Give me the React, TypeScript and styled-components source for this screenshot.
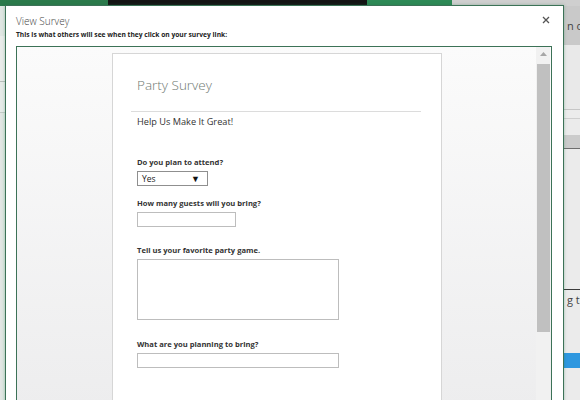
import React from 'react'
import styled, { createGlobalStyle } from 'styled-components'

const GlobalStyle = createGlobalStyle`
  html, body {
    margin: 0;
    padding: 0;
    overflow: hidden;
  }
  body {
    font-family: 'Open Sans', 'Noto Sans', sans-serif;
    color: #333;
  }
`

const Screen = styled.div`
  position: relative;
  width: 580px;
  height: 400px;
  overflow: hidden;
  background: #ebebeb;
`

const TopStrip = styled.div`
  display: flex;
  height: 6px;
`

const StripPart = styled.div<{ $w?: number; $c: string }>`
  background: ${p => p.$c};
  ${p => (p.$w ? `width: ${p.$w}px;` : 'flex: 1;')}
`

const Behind = styled.div`
  display: flex;
  justify-content: space-between;
  height: 394px;
`

const LeftEdge = styled.div`
  width: 6px;
  background: linear-gradient(to right, #e4e6e5, #d7e6dd);
  display: flex;
  flex-direction: column;
`

const LeftBit = styled.div<{ $h: number; $c: string }>`
  height: ${p => p.$h}px;
  background: ${p => p.$c};
`

const RightEdge = styled.div`
  width: 16px;
  display: flex;
  flex-direction: column;
  font-family: 'Open Sans', sans-serif;
  font-size: 11px;
  color: #444;
  white-space: nowrap;
  overflow: hidden;
`

const RightBand = styled.div<{ $h: number; $c: string; $line?: string }>`
  height: ${p => p.$h}px;
  flex-shrink: 0;
  background: ${p => p.$c};
  border-bottom: ${p => (p.$line ? `1px solid ${p.$line}` : 'none')};
  padding-left: 3px;
  line-height: ${p => p.$h}px;
  overflow: hidden;
`

const Modal = styled.div`
  position: absolute;
  left: 5px;
  top: 5px;
  width: 559px;
  height: 420px;
  background: #fff;
  border: 1px solid #3c7257;
  box-shadow: 0 0 3px rgba(33, 115, 70, 0.35);
  padding: 6px 11px 0 10px;
  box-sizing: border-box;
  display: flex;
  flex-direction: column;
`

const Header = styled.div`
  position: relative;
`

const Title = styled.div`
  font-size: 10px;
  font-weight: 300;
  color: #444;
  line-height: 16px;
  margin-top: 1px;
`

const Subtitle = styled.div`
  font-size: 6.7px;
  font-weight: 700;
  color: #222;
  line-height: 10px;
  margin-top: 1px;
`

const Close = styled.button`
  position: absolute;
  right: 0;
  top: 1px;
  border: none;
  background: none;
  padding: 0;
  width: 12px;
  height: 14px;
  display: flex;
  align-items: center;
  justify-content: center;
  cursor: pointer;
`

const Frame = styled.div`
  margin-top: 6px;
  height: 360px;
  border: 1px solid #3c7257;
  background: linear-gradient(to bottom, #fbfbfb, #ededee);
  display: flex;
`

const FrameBody = styled.div`
  flex: 1;
  padding: 6px 0 0 95px;
  overflow: hidden;
`

const Scrollbar = styled.div`
  width: 14px;
  margin-right: 1px;
  background: #f1f1f1;
  display: flex;
  flex-direction: column;
  align-items: center;
`

const ScrollArrow = styled.div`
  height: 14px;
  display: flex;
  align-items: center;
  justify-content: center;
`

const Thumb = styled.div`
  width: 13px;
  height: 268px;
  background: #c0c0c0;
  margin-top: 3px;
`

const Card = styled.div`
  width: 328px;
  height: 360px;
  background: #fff;
  border: 1px solid #d6d6d6;
`

const CardTitle = styled.div`
  font-size: 13.5px;
  font-weight: 300;
  color: #6f7a73;
  line-height: 20px;
  padding: 21px 0 0 24px;
`

const Divider = styled.hr`
  border: none;
  border-top: 1px solid #dcdcdc;
  margin: 16px 20px 0 18px;
`

const Intro = styled.div`
  font-size: 9.2px;
  color: #333;
  line-height: 12px;
  padding: 4px 0 0 24px;
`

const Form = styled.div`
  padding: 0 0 0 24px;
`

const Field = styled.div<{ $top: number }>`
  margin-top: ${p => p.$top}px;
  display: flex;
  flex-direction: column;
  align-items: flex-start;
`

const Label = styled.div`
  font-size: 7.6px;
  font-weight: 700;
  color: #333;
  line-height: 12px;
  margin-bottom: 3px;
`

const Select = styled.div`
  height: 13px;
  width: 58px;
  border: 1px solid #8f8f8f;
  display: flex;
  align-items: center;
  justify-content: space-between;
  padding: 0 7px 0 4px;
  box-sizing: content-box;
  font-size: 8.5px;
  color: #222;
`

const Caret = styled.span`
  font-size: 9px;
  color: #111;
`

const Input = styled.div<{ $w: number; $h: number }>`
  width: ${p => p.$w}px;
  height: ${p => p.$h}px;
  border: 1px solid #bdbdbd;
  background: #fff;
`

export default function App() {
  return (
    <>
      <GlobalStyle />
      <Screen>
        <TopStrip>
          <StripPart $w={108} $c="#2b7a4b" />
          <StripPart $w={259} $c="#141414" />
          <StripPart $w={85} $c="#2e8a57" />
          <StripPart $c="#cfcfcf" />
        </TopStrip>
        <Behind>
          <LeftEdge>
            <LeftBit $h={30} $c="#dfe6e2" />
            <LeftBit $h={45} $c="#e9ecea" />
            <LeftBit $h={1} $c="#b9c0bc" />
            <LeftBit $h={30} $c="#e6ebe8" />
            <LeftBit $h={1} $c="#c3cbc6" />
          </LeftEdge>
          <RightEdge>
            <RightBand $h={39} $c="#c9c9c9">n o</RightBand>
            <RightBand $h={64} $c="#e9e9e9" $line="#c6c6c6" />
            <RightBand $h={8} $c="#ececec" $line="#cfcfcf" />
            <RightBand $h={16} $c="#ebebeb" />
            <RightBand $h={13} $c="#cbcbcb" $line="#6d6d6d" />
            <RightBand $h={140} $c="#ebebeb" $line="#3a3a3a" />
            <RightBand $h={20} $c="#ebebeb">g to</RightBand>
            <RightBand $h={43} $c="#ebebeb" />
            <RightBand $h={15} $c="#2e97df" />
            <RightBand $h={40} $c="#ebebeb" />
          </RightEdge>
        </Behind>

        <Modal>
          <Header>
            <Title>View Survey</Title>
            <Subtitle>This is what others will see when they click on your survey link:</Subtitle>
            <Close aria-label="Close">
              <svg width="8" height="8" viewBox="0 0 8 8">
                <path d="M1 1 L7 7 M7 1 L1 7" stroke="#555" strokeWidth="1.3" />
              </svg>
            </Close>
          </Header>

          <Frame>
            <FrameBody>
              <Card>
                <CardTitle>Party Survey</CardTitle>
                <Divider />
                <Intro>Help Us Make It Great!</Intro>
                <Form>
                  <Field $top={28}>
                    <Label>Do you plan to attend?</Label>
                    <Select>
                      <span>Yes</span>
                      <Caret>▼</Caret>
                    </Select>
                  </Field>
                  <Field $top={11}>
                    <Label>How many guests will you bring?</Label>
                    <Input $w={97} $h={13} />
                  </Field>
                  <Field $top={17}>
                    <Label>Tell us your favorite party game.</Label>
                    <Input $w={200} $h={59} />
                  </Field>
                  <Field $top={18}>
                    <Label>What are you planning to bring?</Label>
                    <Input $w={200} $h={13} />
                  </Field>
                </Form>
              </Card>
            </FrameBody>
            <Scrollbar>
              <ScrollArrow>
                <svg width="7" height="4" viewBox="0 0 7 4">
                  <path d="M0 4 L3.5 0 L7 4 Z" fill="#a6a6a6" />
                </svg>
              </ScrollArrow>
              <Thumb />
            </Scrollbar>
          </Frame>
        </Modal>
      </Screen>
    </>
  )
}
